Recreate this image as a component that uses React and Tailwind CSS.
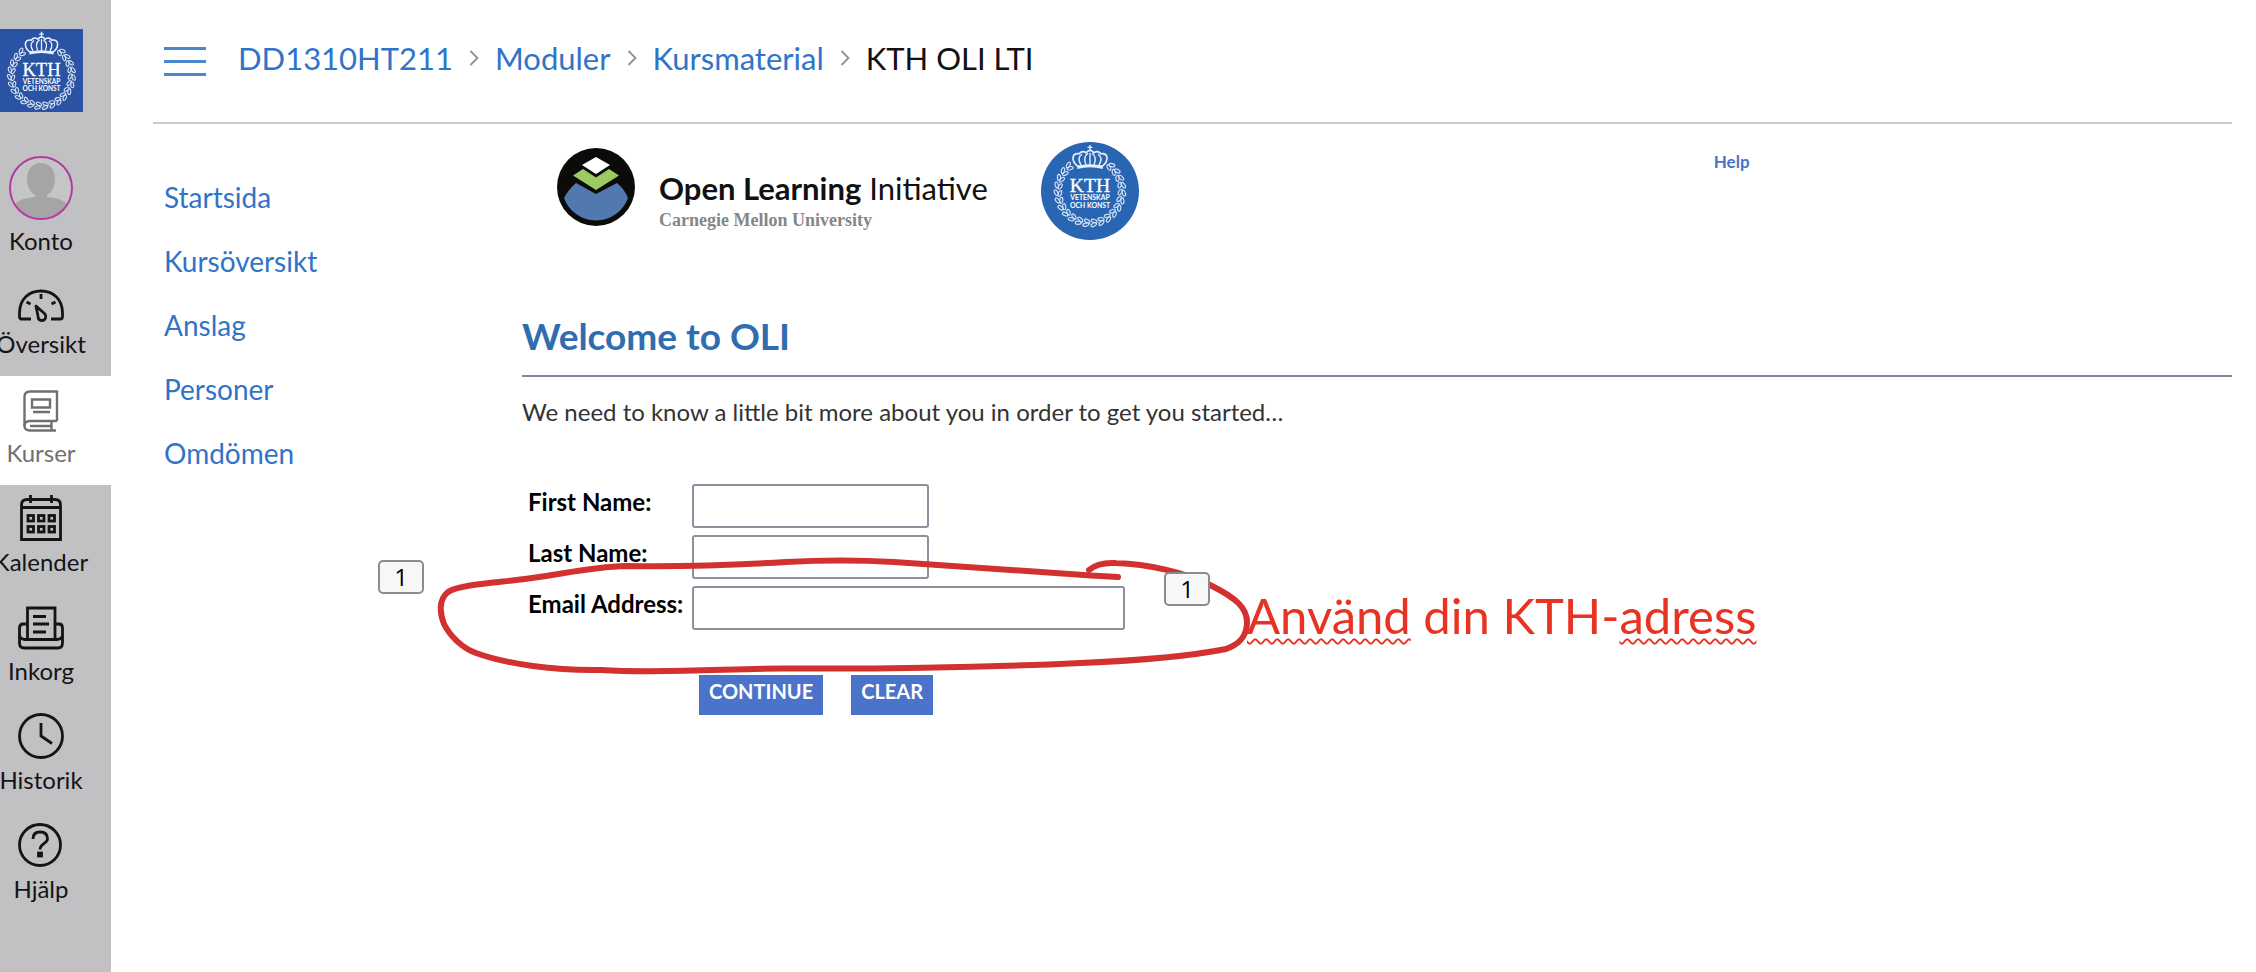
import React from "react";

const WREATH = Array.from({ length: 22 }, (_, i) => -50 + i * (280 / 21));

function Seal({ className, square, color }) {
  return (
    <svg viewBox="0 0 100 100" className={className} role="img" aria-label="KTH">
      {square ? <rect width="100" height="100" fill={color} /> : <circle cx="50" cy="50" r="50" fill={color} />}
      <g transform={square ? "translate(-6 0) scale(1.12)" : undefined}>
        <g fill="none" stroke="#d3e0f2" strokeWidth="1.2">
          {WREATH.map((a, i) => (
            <g key={i} transform={`translate(50 50) rotate(${a}) translate(32.500 0)`}>
              <ellipse cx="-1.8" cy="0" rx="1.6" ry="3.1" transform="rotate(24)" />
              <ellipse cx="1.8" cy="1" rx="1.6" ry="3.1" transform="rotate(-24)" />
            </g>
          ))}
        </g>
        <path d="M37 24.500 C30 18 32 11 39 12 Q42 8 46 11 Q50 6 54 11 Q58 8 61 12 C68 11 70 18 63 24.500 Z" fill={color} stroke="#e9f0fa" strokeWidth="1.7" />
        <path d="M41 23.500 C37 18 39 14 42 12.500 M46 23.500 C43.500 18 44.500 14 48 11.500 M54 23.500 C56.500 18 55.500 14 52 11.500 M59 23.500 C63 18 61 14 58 12.500 M50 11 V23.500 M50 3 V9 M47.500 5.500 H52.500" fill="none" stroke="#e9f0fa" strokeWidth="1.4" />
        <path d="M37 24.500 Q50 21 63 24.500 V27.500 Q50 24 37 27.500 Z" fill="#e9f0fa" />
        <text x="50" y="51" textAnchor="middle" fontFamily="Liberation Serif, serif" fontSize="20" fill="#ffffff" stroke="#ffffff" strokeWidth="0.3">KTH</text>
        <text x="50" y="59.500" textAnchor="middle" fontFamily="Lato, sans-serif" fontWeight="700" fontSize="7" fill="#ffffff">VETENSKAP</text>
        <text x="50" y="67" textAnchor="middle" fontFamily="Lato, sans-serif" fontWeight="700" fontSize="7" fill="#ffffff">OCH KONST</text>
      </g>
    </svg>
  );
}

function Avatar() {
  return (
    <svg viewBox="0 0 64 64" className="size-16 shrink-0" aria-hidden="true">
      <defs>
        <clipPath id="face"><circle cx="32" cy="32" r="30" /></clipPath>
      </defs>
      <circle cx="32" cy="32" r="31" fill="#c5c5c7" />
      <g clipPath="url(#face)" fill="#a5a5a6">
        <path d="M32 7 C41 7 46 14 46 23 C46 31 42 37 38 39 V41 C50 42 57 45 60 51 V64 H4 V51 C7 45 14 42 26 41 V39 C22 37 18 31 18 23 C18 14 23 7 32 7 Z" />
      </g>
      <circle cx="32" cy="32" r="31" fill="none" stroke="#b23ca4" strokeWidth="2" />
    </svg>
  );
}

function GaugeIcon() {
  return (
    <svg viewBox="0 0 46 34" className="h-[34px] w-[46px] shrink-0" fill="none" stroke="currentColor" strokeWidth="2.800" aria-hidden="true">
      <path d="M13 30 H3 Q1.500 30 1.500 27 V24 C1.500 10 11 2 23 2 S44.500 10 44.500 24 V27 Q44.500 30 43 30 H33" />
      <path d="M23 5 V10 M8.500 13 L12.500 15 M37.500 13 L33.500 15" />
      <path d="M18 17 L27 25 C29 28 27 31.500 24 31.500 S20 29.500 20 27 Z" strokeLinejoin="round" />
    </svg>
  );
}

function BookIcon() {
  return (
    <svg viewBox="0 0 36 42" className="h-[42px] w-[36px] shrink-0" fill="none" stroke="currentColor" strokeWidth="2.400" aria-hidden="true">
      <path d="M34 31 V1.500 H7 C3 1.500 1.500 4 1.500 7 V36 C1.500 39 4 40.500 7 40.500 H33" />
      <path d="M34 31 H7 C4 31 1.500 32.500 1.500 36 M28.500 31 V40 M7 36 H28" />
      <path d="M9 9.500 H27 V17.500 H9 Z M10 22 H27" />
    </svg>
  );
}

function CalendarIcon() {
  return (
    <svg viewBox="0 0 42 46" className="h-[46px] w-[42px] shrink-0" fill="none" stroke="currentColor" strokeWidth="2.800" aria-hidden="true">
      <path d="M1.500 44.500 V10 Q1.500 4.500 7 4.500 H35 Q40.500 4.500 40.500 10 V44.500 Z M1.500 12.500 H40.500 M10.500 0 V8 M31.500 0 V8" />
      {[8, 18.5, 29].map((x) => [20.5, 31.5].map((y) => <rect key={x + "-" + y} x={x} y={y} width="5.500" height="5.500" />))}
    </svg>
  );
}

function InboxIcon() {
  return (
    <svg viewBox="0 0 46 44" className="h-[44px] w-[46px] shrink-0" fill="none" stroke="currentColor" strokeWidth="2.800" aria-hidden="true">
      <path d="M9.500 33 V2 H37 V33 M9.500 18 H5 Q1.500 18 1.500 22 V37 Q1.500 42 6 42 H40 Q44.500 42 44.500 37 V22 Q44.500 18 41 18 H37" />
      <path d="M1.500 30 Q3 33.500 7 33.500 H39 Q43 33.500 44.500 30 M15 10.500 H28 M15 18 H31 M15 26 H28" />
    </svg>
  );
}

function ClockIcon() {
  return (
    <svg viewBox="0 0 46 46" className="size-[46px] shrink-0" fill="none" stroke="currentColor" strokeWidth="2.800" aria-hidden="true">
      <circle cx="23" cy="23" r="21.500" />
      <path d="M23 10 V23 L34 30.500" />
    </svg>
  );
}

function HelpIcon() {
  return (
    <svg viewBox="0 0 46 46" className="size-[46px] shrink-0" fill="none" stroke="currentColor" strokeWidth="2.800" aria-hidden="true">
      <circle cx="22" cy="23" r="20.500" />
      <path d="M15 17 Q15 10 22 10 Q29.500 10 29.500 17 C29.500 21 22 22 22 27.500" />
      <rect x="20.500" y="31" width="3" height="3" fill="currentColor" />
    </svg>
  );
}

const NAV = [
  ["Översikt", GaugeIcon],
  ["Kurser", BookIcon],
  ["Kalender", CalendarIcon],
  ["Inkorg", InboxIcon],
  ["Historik", ClockIcon],
  ["Hjälp", HelpIcon],
];

function GlobalNav() {
  return (
    <nav className="w-[111px] shrink-0 overflow-hidden bg-[#c1c1c3] pt-7 text-2xl leading-7 text-[#141414]">
      <a href="#home" className="block w-[83px]">
        <Seal square color="#2a54a3" className="h-[85px] w-[83px]" />
      </a>
      <a href="#konto" className="mt-[43px] flex w-[82px] flex-col items-center gap-[7px] pb-3">
        <Avatar />
        <span>Konto</span>
      </a>
      {NAV.map(([label, Icon]) => (
        <div key={label} className={label === "Kurser" ? "bg-white text-[#6f7073]" : ""}>
          <a href={"#" + label} className="flex h-[109px] w-[82px] flex-col items-center justify-end gap-[7px] pb-[18px]">
            <Icon />
            <span>{label}</span>
          </a>
        </div>
      ))}
    </nav>
  );
}

function Crumbs() {
  const sep = (
    <svg viewBox="0 0 10 16" className="h-4 w-[10px] shrink-0" fill="none" stroke="#8b9197" strokeWidth="1.800" aria-hidden="true">
      <path d="M1.500 1 L8.500 8 L1.500 15" />
    </svg>
  );
  return (
    <header className="flex h-[124px] items-center gap-8 border-b-2 border-[#c7cdd1] pl-[11px]">
      <button type="button" aria-label="Meny" className="flex w-[42px] flex-col gap-[10px]">
        <span className="h-[3px] bg-[#4a87cf]" />
        <span className="h-[3px] bg-[#4a87cf]" />
        <span className="h-[3px] bg-[#4a87cf]" />
      </button>
      <nav className="flex items-center gap-4 pb-1.5 text-[31px] leading-10 text-[#2f74c8]">
        <a href="#kurs">DD1310HT211</a>
        {sep}
        <a href="#moduler">Moduler</a>
        {sep}
        <a href="#kursmaterial">Kursmaterial</a>
        {sep}
        <span className="text-[#111111]">KTH OLI LTI</span>
      </nav>
    </header>
  );
}

function OliMark() {
  return (
    <svg viewBox="0 0 78 78" className="size-[78px] shrink-0" aria-hidden="true">
      <circle cx="39" cy="39" r="39" fill="#0b0c0a" />
      <path d="M19 35 L39 46 L60 35 Q68 42 71 50 A34 34 0 0 1 7 50 Q11 42 19 35 Z" fill="#5278b0" />
      <path d="M39 9 L53 17 L39 26 L25 17 Z" fill="#ffffff" />
      <path d="M26 21 L39 29.500 L52 21 L62 27.500 L39 42 L16 27.500 Z" fill="#9cca62" />
    </svg>
  );
}

function Brand() {
  return (
    <div className="flex h-[173px] pt-[18px] pl-[35px]">
      <div className="flex items-start pt-[6px]">
        <OliMark />
        <div className="pt-[22px] pl-6">
          <div className="text-[31px] leading-9 text-[#111111]"><b>Open Learning</b> Initiative</div>
          <div className="pt-0.5 font-['Liberation_Serif',serif] text-lg leading-6 font-bold text-[#868686]">Carnegie Mellon University</div>
        </div>
      </div>
      <Seal color="#2865b3" className="ml-[53px] size-[98px] shrink-0" />
      <a href="#help" className="ml-[575px] pt-2 text-[17px] leading-6 font-bold text-[#4a73c9]">Help</a>
    </div>
  );
}

const INPUT = "h-11 rounded-[3px] border-2 border-[#8f8f9d] bg-white px-2";
const BUTTON = "h-10 bg-[#4a73c9] px-[10px] pb-2 text-xl leading-8 font-bold text-white";

function Welcome() {
  return (
    <main className="min-w-0 flex-1">
      <Brand />
      <h1 className="border-b-2 border-[#7f8899] pt-3.5 pb-3.5 text-[37px] leading-[50px] font-bold text-[#2f6dae]">Welcome to OLI</h1>
      <p className="pt-[19px] text-2xl leading-8 text-[#333333]">We need to know a little bit more about you in order to get you started…</p>
      <form className="pt-14 pl-[6px]" onSubmit={(e) => e.preventDefault()}>
        <div className="grid grid-cols-[164px_1fr] gap-y-[7px] text-2xl font-bold text-black">
          <label htmlFor="first" className="leading-9">First Name:</label>
          <input id="first" type="text" className={INPUT + " w-[237px]"} />
          <label htmlFor="last" className="leading-9">Last Name:</label>
          <input id="last" type="text" className={INPUT + " w-[237px]"} />
          <label htmlFor="email" className="leading-9">Email Address:</label>
          <input id="email" type="email" className={INPUT + " w-[433px]"} />
        </div>
        <div className="flex gap-7 pt-[45px] pl-[171px]">
          <button type="submit" className={BUTTON}>CONTINUE</button>
          <button type="reset" className={BUTTON}>CLEAR</button>
        </div>
      </form>
    </main>
  );
}

const BADGE = "absolute flex h-[34px] w-[46px] items-center justify-center rounded-[5px] border-2 border-[#8c8c8c] bg-[#f7f7f7] font-['Open_Sans',sans-serif] text-2xl text-black";
const SPELL = "underline decoration-wavy decoration-2 underline-offset-4";

function Annotations() {
  return (
    <div className="pointer-events-none absolute inset-0">
      <svg viewBox="0 0 820 120" className="absolute top-[556px] left-[436px] h-[120px] w-[820px]" fill="none" stroke="#d3312f" strokeWidth="6" strokeLinecap="round" strokeLinejoin="round" aria-hidden="true">
        <path d="M682 21 L655 19.500 Q550 12 458 6 Q405 3 350 6 C300 9 250 11 190 10 C150 11 120 20 80 24 C45 28 20 30 12 36 C2 44 4 58 8 68 C14 80 26 92 40 97 C70 108 120 115 165 114" />
        <path d="M165 114 C230 118 300 112 350 112.500 C440 113 560 111 645 107 Q740 103 790 93 C804 88 811 80 811 66 C811 52 800 42 776 30 C750 16 710 8 680 7 Q662 6 653 14" />
      </svg>
      <div className="absolute top-[585px] left-[1247px] text-[49px] leading-[60px] whitespace-nowrap text-[#e83323]">
        <span className={SPELL}>Använd</span> din KTH-<span className={SPELL}>adress</span>
      </div>
      <div className={BADGE + " top-[560px] left-[378px]"}>1</div>
      <div className={BADGE + " top-[572px] left-[1164px]"}>1</div>
    </div>
  );
}

export default function App() {
  return (
    <div className="relative flex min-h-screen bg-white font-['Lato',sans-serif]">
      <GlobalNav />
      <div className="min-w-0 flex-1 pr-6 pl-[42px]">
        <Crumbs />
        <div className="flex">
          <nav className="flex w-[369px] shrink-0 flex-col gap-8 pt-[57px] pl-[11px] text-[28px] leading-8 text-[#2f74c8]">
            <a href="#startsida">Startsida</a>
            <a href="#kursoversikt">Kursöversikt</a>
            <a href="#anslag">Anslag</a>
            <a href="#personer">Personer</a>
            <a href="#omdomen">Omdömen</a>
          </nav>
          <Welcome />
        </div>
      </div>
      <Annotations />
    </div>
  );
}
